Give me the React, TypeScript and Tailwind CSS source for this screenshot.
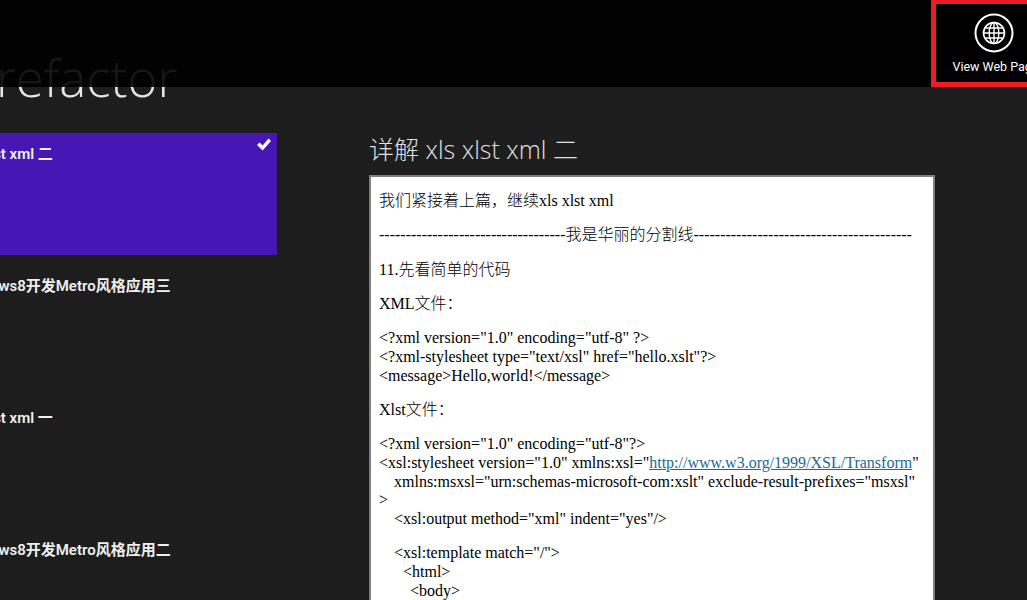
import React from 'react';

const UI = { fontFamily: '"Open Sans", "Noto Sans CJK SC", sans-serif' };
const ROBOTO = { fontFamily: 'Roboto, "Noto Sans CJK SC", sans-serif' };
const DOC = { fontFamily: '"Liberation Serif", "Noto Sans CJK SC", serif' };

const items = [
  { title: '详解 xls xlst xml 二', selected: true, indent: 'pl-[15px]' },
  { title: 'Windows8开发Metro风格应用三', indent: 'pl-[46px]' },
  { title: '详解 xls xlst xml 一', indent: 'pl-[15px]' },
  { title: 'Windows8开发Metro风格应用二', indent: 'pl-[46px]' },
];

const GlobeButton = () => (
  <svg width="40" height="40" viewBox="0 0 40 40" fill="none" stroke="white">
    <circle cx="20" cy="20" r="18.5" strokeWidth="2" />
    <circle cx="20" cy="20" r="10.5" strokeWidth="1.6" />
    <ellipse cx="20" cy="20" rx="4.8" ry="10.5" strokeWidth="1.4" />
    <path d="M20 9.5V30.5M9.5 20H30.5M11 15H29M11 25H29" strokeWidth="1.4" />
  </svg>
);

const Tile = ({ title, selected, indent }: { title: string; selected?: boolean; indent: string }) => (
  <div className={`relative h-[122px] pt-[10px] ${indent} ${selected ? 'bg-[#4617b4]' : ''}`}>
    <p className="text-[15px] leading-[22px] font-semibold text-[#f0f0f0] whitespace-nowrap" style={ROBOTO}>{title}</p>
    {selected && (
      <svg className="absolute right-[5px] top-[4px]" width="16" height="15" viewBox="0 0 16 15">
        <path d="M1 8l2.6-2.6 3 3L12.6 1.5 15 4 6.6 13.5z" fill="white" />
      </svg>
    )}
  </div>
);

export default function App() {
  return (
    <div className="relative w-[1027px] h-[600px] overflow-hidden bg-[#1d1d1d]" style={UI}>
      {/* page */}
      <h1 className="h-[133px] pt-[39px] -ml-[4px] text-[51px] leading-[76px] font-light text-[#e6e6e6]">refactor</h1>
      <div className="flex">
        <div className="w-[277px] shrink-0 flex flex-col gap-[10px]">
          <div className="-ml-[90px] flex flex-col gap-[10px]">
            {items.map(i => <Tile key={i.title} title={i.title} selected={i.selected} indent={i.indent} />)}
          </div>
        </div>
        <div className="ml-[92px] w-[566px] -mt-[2px]">
          <h2 className="text-[25px] leading-[36px] font-light text-[#e0e0e0] whitespace-nowrap">详解 xls xlst xml 二</h2>
          <div className="mt-[8px] h-[500px] border-2 border-[#7f7f7f] bg-white pl-[8px] pt-[15px] text-[16px] leading-[18.75px] font-light text-black" style={DOC}>
            <p className="mb-[15.5px]">我们紧接着上篇，继续xls xlst xml</p>
            <p className="mb-[15.5px] whitespace-nowrap">-----------------------------------我是华丽的分割线-----------------------------------------</p>
            <p className="mb-[15.5px]">11.先看简单的代码</p>
            <p className="mb-[15.5px]">XML文件：</p>
            <p className="mb-[15.5px]">
              &lt;?xml version="1.0" encoding="utf-8" ?&gt;<br />
              &lt;?xml-stylesheet type="text/xsl" href="hello.xslt"?&gt;<br />
              &lt;message&gt;Hello,world!&lt;/message&gt;
            </p>
            <p className="mb-[15.5px]">Xlst文件：</p>
            <p className="mb-[15.5px]">
              &lt;?xml version="1.0" encoding="utf-8"?&gt;<br />
              &lt;xsl:stylesheet version="1.0" xmlns:xsl="<a className="underline text-[#1a6a96]">http://www.w3.org/1999/XSL/Transform</a>"<br />
              <span className="pl-[15px]">xmlns:msxsl="urn:schemas-microsoft-com:xslt" exclude-result-prefixes="msxsl"</span><br />
              &gt;<br />
              <span className="pl-[15px]">&lt;xsl:output method="xml" indent="yes"/&gt;</span>
            </p>
            <p className="pl-[15px]">&lt;xsl:template match="/"&gt;</p>
            <p className="pl-[24px]">&lt;html&gt;</p>
            <p className="pl-[31px]">&lt;body&gt;</p>
          </div>
        </div>
      </div>
      {/* app bar, over the page */}
      <div className="absolute inset-x-0 top-0 h-[87px] bg-black/90 flex justify-end">
        <div className="-mr-[30px] w-[126px] h-[87px] border-[5px] border-t-[4px] border-[#ed1c24] bg-black flex flex-col items-center pt-[9px]">
          <GlobeButton />
          <span className="mt-[6px] ml-[3px] text-[12.5px] leading-[16px] text-white whitespace-nowrap" style={ROBOTO}>View Web Page</span>
        </div>
      </div>
    </div>
  );
}
